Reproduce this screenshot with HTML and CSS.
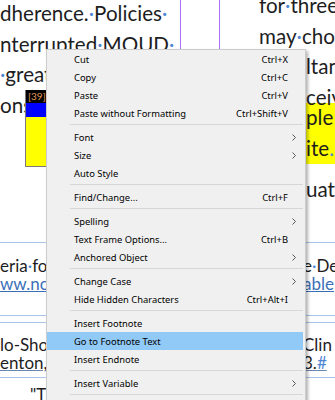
FILE: index.html
```html
<!DOCTYPE html>
<html lang="en">

<head>
    <meta charset="UTF-8">
    <title>Context Menu</title>
    <link rel="stylesheet" href="styles.css">
</head>

<body>
    <div class="doc">
        <div class="top">
            <div class="col col-left">
                <div class="line">dherence.<span class="dot">·</span>Policies<span class="dot">·</span></div>
                <div class="line">nterrupted<span class="dot">·</span>MOUD<span class="dot">·</span></div>
                <div class="line"><span class="dot">·</span>greater<span class="dot">·</span>access</div>
                <div class="line anchored">ons
                    <div class="anchor">
                        <div class="tag">[39]</div>
                        <div class="blue"></div>
                        <div class="yellow"></div>
                    </div>
                </div>
            </div>
            <div class="gutter"></div>
            <div class="col col-right">
                <div class="line">for<span class="dot">·</span>three<span class="dot">·</span></div>
                <div class="line">may<span class="dot">·</span>choose<span class="dot">·</span></div>
                <div class="line far">ltan</div>
                <div class="line far">ceiv</div>
                <div class="hl">
                    <div class="line far">ple</div>
                    <div class="line far">ite<span class="dot">.</span></div>
                </div>
                <div class="line far">uat</div>
            </div>
        </div>
        <div class="notes">
            <div class="note note-one">
                <div class="row"><span>eria<span class="dot">·</span>for</span><span class="right">e<span class="dot">·</span>De</span></div>
                <div class="row"><span class="link">ww.ncbi</span><span class="right link">able</span></div>
            </div>
            <div class="note note-two">
                <div class="row"><span>lo-Sho</span><span class="right">Clin</span></div>
                <div class="row"><span class="under">enton,<span class="dot">·</span></span><span class="right under">3.<span class="dot">#</span></span></div>
            </div>
            <div class="note note-three">
                <div class="row"><span class="quote">"T</span></div>
            </div>
        </div>
    </div>

    <div class="menu">
        <div class="item"><span>Cut</span><span class="key">Ctrl+X</span></div>
        <div class="item"><span>Copy</span><span class="key">Ctrl+C</span></div>
        <div class="item"><span>Paste</span><span class="key">Ctrl+V</span></div>
        <div class="item"><span>Paste without Formatting</span><span class="key">Ctrl+Shift+V</span></div>
        <div class="sep"></div>
        <div class="item sub"><span>Font</span><svg class="arrow" viewBox="0 0 4 7"><path d="M0.5 0.5 L3.5 3.5 L0.5 6.5" /></svg></div>
        <div class="item sub"><span>Size</span><svg class="arrow" viewBox="0 0 4 7"><path d="M0.5 0.5 L3.5 3.5 L0.5 6.5" /></svg></div>
        <div class="item"><span>Auto Style</span></div>
        <div class="sep"></div>
        <div class="item"><span>Find/Change...</span><span class="key">Ctrl+F</span></div>
        <div class="sep"></div>
        <div class="item sub"><span>Spelling</span><svg class="arrow" viewBox="0 0 4 7"><path d="M0.5 0.5 L3.5 3.5 L0.5 6.5" /></svg></div>
        <div class="item"><span>Text Frame Options...</span><span class="key">Ctrl+B</span></div>
        <div class="item sub"><span>Anchored Object</span><svg class="arrow" viewBox="0 0 4 7"><path d="M0.5 0.5 L3.5 3.5 L0.5 6.5" /></svg></div>
        <div class="sep"></div>
        <div class="item sub"><span>Change Case</span><svg class="arrow" viewBox="0 0 4 7"><path d="M0.5 0.5 L3.5 3.5 L0.5 6.5" /></svg></div>
        <div class="item"><span>Hide Hidden Characters</span><span class="key">Ctrl+Alt+I</span></div>
        <div class="sep"></div>
        <div class="item"><span>Insert Footnote</span></div>
        <div class="item active"><span>Go to Footnote Text</span></div>
        <div class="item"><span>Insert Endnote</span></div>
        <div class="sep"></div>
        <div class="item sub"><span>Insert Variable</span><svg class="arrow" viewBox="0 0 4 7"><path d="M0.5 0.5 L3.5 3.5 L0.5 6.5" /></svg></div>
        <div class="sep"></div>
        <div class="item sub"><span>Insert Special Character</span><svg class="arrow" viewBox="0 0 4 7"><path d="M0.5 0.5 L3.5 3.5 L0.5 6.5" /></svg></div>
    </div>
</body>

</html>
```

FILE: styles.css
```css
body {
    margin: 0;
    width: 335px;
    height: 400px;
    overflow: hidden;
    position: relative;
    background: #fff;
    font-family: 'Lato', 'Liberation Sans', sans-serif;
    color: #1d1d1f;
}

.doc {
    width: 335px;
}

.top {
    display: grid;
    grid-template-columns: 181px 38px 1fr;
    height: 242px;
    overflow: hidden;
}

.col {
    font-size: 20.6px;
}

.col-left {
    border-right: 1px solid #a873f2;
}

.col-left .line:first-child {
    margin-top: -2px;
}

.col-right {
    border-left: 1px solid #a873f2;
    padding-left: 39px;
}

.col-right .line:first-child {
    margin-top: -10px;
}

.line {
    height: 30.6px;
    line-height: 30.6px;
    white-space: nowrap;
}

.line.far {
    padding-left: 47px;
}

.dot {
    color: #4f86d4;
}

.anchored {
    position: relative;
}

.anchor {
    position: absolute;
    left: 25px;
    top: 0;
    width: 40px;
    height: 76px;
    display: flex;
    flex-direction: column;
    border-left: 1px solid #7a7a7a;
    border-bottom: 1px solid #7a7a7a;
}

.anchor .tag {
    height: 13px;
    background: #000;
    color: #e39a5a;
    font-size: 10px;
    line-height: 13px;
    padding-left: 2px;
}

.anchor .blue {
    height: 14px;
    background: #0000ff;
}

.anchor .yellow {
    flex: 1;
    background: #ffff00;
}

.hl {
    background: #ffff00;
    height: 61px;
    margin: -9.4px 0 9.6px;
    padding-top: 9.4px;
    box-sizing: border-box;
}

.notes {
    border-top: 1px solid #a9c4ea;
    font-size: 17px;
}

.note .row {
    display: flex;
    justify-content: space-between;
    height: 18px;
    line-height: 18px;
    white-space: nowrap;
}

.note .right {
    width: 32px;
    overflow: hidden;
}

.note-one {
    padding: 14px 0 22px;
    border-bottom: 1px solid #a9c4ea;
}

.note-two {
    margin-top: 6px;
    border-top: 1px solid #a9c4ea;
    padding: 13px 0 5px;
    border-bottom: 1px solid #a9c4ea;
}

.note-three {
    padding-top: 8px;
}

.link {
    color: #3a6fb8;
    text-decoration: underline;
}

.under {
    text-decoration: underline;
    text-decoration-color: #6b86b0;
}

.quote {
    padding-left: 30px;
}

.menu {
    position: absolute;
    left: 46px;
    top: 49px;
    width: 260px;
    height: 370px;
    box-sizing: border-box;
    padding: 0 2px 0 0;
    background: #f0f0f0;
    border: 1px solid #cccccc;
    box-shadow: 2px 2px 3px rgba(0, 0, 0, 0.3);
    font-family: 'Noto Sans', 'Open Sans', sans-serif;
    font-size: 9.4px;
    color: #000;
}

.item {
    display: flex;
    justify-content: space-between;
    align-items: center;
    height: 18px;
    padding: 0 15px 0 27px;
    white-space: nowrap;
}

.item.sub {
    padding-right: 7px;
}

.item.active {
    background: #91c9f7;
}

.arrow {
    width: 4px;
    height: 7px;
}

.arrow path {
    fill: none;
    stroke: #555;
    stroke-width: 1;
}

.sep {
    height: 6px;
    margin-left: 23px;
    position: relative;
}

.sep::after {
    content: "";
    position: absolute;
    left: 0;
    right: 0;
    top: 2px;
    height: 1px;
    background: #d7d7d7;
}
```
